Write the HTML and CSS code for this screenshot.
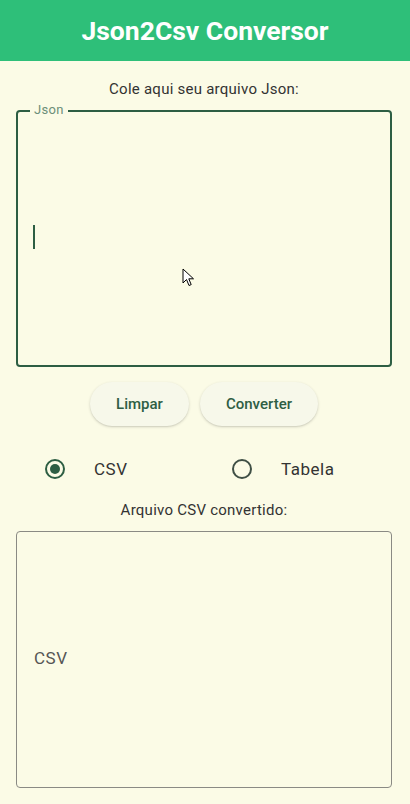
FILE: index.html
```html
<!DOCTYPE html>
<html lang="pt">
<head>
<meta charset="utf-8">
<title>Json2Csv Conversor</title>
<link rel="stylesheet" href="styles.css">
</head>
<body>
<header class="appbar"><h1 class="title">Json2Csv Conversor</h1></header>
<main class="content">
  <p class="caption">Cole aqui seu arquivo Json:</p>
  <div class="json-field">
    <span class="json-label">Json</span>
    <span class="caret"></span>
  </div>
  <div class="actions">
    <button class="pill pill-limpar">Limpar</button>
    <button class="pill pill-converter">Converter</button>
  </div>
  <div class="radios">
    <label class="radio-opt"><span class="radio radio-on"></span><span class="radio-text">CSV</span></label>
    <label class="radio-opt"><span class="radio"></span><span class="radio-text">Tabela</span></label>
  </div>
  <p class="caption caption-out">Arquivo CSV convertido:</p>
  <div class="out-box"><span class="out-text">CSV</span></div>
</main>
<svg class="pointer" width="13" height="20" viewBox="0 0 13 20"><path d="M1 1 L1 15 L4.5 11.5 L7 17.5 L9.2 16.6 L6.8 10.8 L11.5 10.8 Z" fill="#fff" stroke="#000" stroke-width="1" stroke-linejoin="miter"/></svg>
</body>
</html>
```
FILE: styles.css
```css
* { box-sizing: border-box; }
html, body { margin: 0; padding: 0; }
body {
  width: 410px;
  height: 804px;
  background: #fbfbe6;
  font-family: Roboto, "Liberation Sans", sans-serif;
  color: #333;
  position: relative;
  overflow: hidden;
}
.appbar {
  height: 61px;
  background: #2ebf79;
  display: flex;
  align-items: center;
  justify-content: center;
}
.title {
  margin: 0;
  color: #fff;
  font-size: 26.5px;
  font-weight: 700;
}
.content {
  display: flex;
  flex-direction: column;
  align-items: center;
  padding: 0 18px 0 16px;
}
.caption {
  margin: 19px 0 0;
  font-size: 15px;
  letter-spacing: 0.25px;
  line-height: 18px;
  color: #333;
}
.json-field {
  margin-top: 12px;
  width: 376px;
  height: 257px;
  border: 2px solid #2d5e43;
  border-radius: 4px;
  padding-left: 15px;
  position: relative;
  display: flex;
  align-items: center;
}
.json-label {
  position: absolute;
  left: 12px;
  top: -9px;
  padding: 0 4px;
  background: #fbfbe6;
  font-size: 13px;
  line-height: 14px;
  letter-spacing: 0.3px;
  color: #6c8f79;
}
.caret {
  display: block;
  width: 2px;
  height: 24px;
  background: #2d5e43;
  margin-top: -3px;
}
.actions {
  display: flex;
  gap: 11px;
  margin-top: 15px;
}
.pill {
  height: 44px;
  border: none;
  border-radius: 22px;
  background: #f7f8ea;
  box-shadow: 0 1px 3px rgba(0,0,0,0.16), 0 1px 1px rgba(0,0,0,0.05);
  font-family: Roboto, "Liberation Sans", sans-serif;
  font-size: 15px;
  font-weight: 500;
  color: #2e5e44;
  padding: 0;
}
.pill-limpar { width: 99px; }
.pill-converter { width: 118px; }
.radios {
  align-self: stretch;
  display: flex;
  margin-top: 23px;
  height: 40px;
  align-items: center;
}
.radio-opt {
  display: flex;
  align-items: center;
  width: 187px;
  padding-left: 29px;
}
.radio {
  width: 20px;
  height: 20px;
  border-radius: 50%;
  border: 2px solid #3f4f45;
  display: flex;
  align-items: center;
  justify-content: center;
  flex-shrink: 0;
}
.radio-on { border-color: #2d5e43; }
.radio-on::after {
  content: "";
  width: 10px;
  height: 10px;
  border-radius: 50%;
  background: #2d5e43;
}
.radio-text {
  margin-left: 29px;
  font-size: 17px;
  letter-spacing: 0.5px;
  color: #333;
}
.caption-out { margin-top: 12px; }
.out-box {
  margin-top: 12px;
  width: 376px;
  height: 257px;
  border: 1px solid #8a8a84;
  border-radius: 4px;
  display: flex;
  align-items: center;
  padding-left: 17px;
}
.out-text {
  font-size: 17px;
  letter-spacing: 0.5px;
  color: #555;
  margin-top: -3px;
}
.pointer {
  position: absolute;
  left: 182px;
  top: 268px;
}
```
